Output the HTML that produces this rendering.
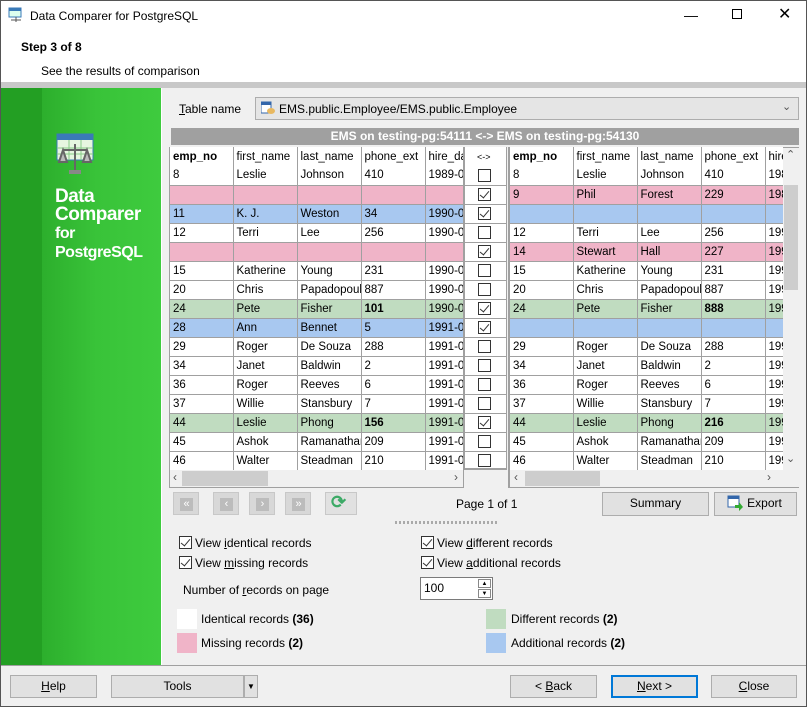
<!DOCTYPE html>
<html><head><meta charset="utf-8"><style>
*{margin:0;padding:0;box-sizing:border-box}
body{width:807px;height:707px;overflow:hidden;background:#f0f0f0;font-family:"Liberation Sans",sans-serif;font-size:12px;color:#000;position:relative}
.a{position:absolute}
.g{position:absolute;border-collapse:collapse;table-layout:fixed;background:#fff}
.g td{height:19px;border:1px solid #a0a0a0;border-top:none;border-left:none;padding:0 3px;white-space:nowrap;overflow:hidden;font-size:11.5px;font-family:"Liberation Sans",sans-serif}
.g tr.h td{font-weight:normal;border-bottom:none;height:19px}
.p td{background:#f0b4c8}.b td{background:#a8c8f0}.n td{background:#c0dcc0}
.btn{position:absolute;background:#e1e1e1;border:1px solid #adadad;text-align:center;line-height:21px;font-size:12px}
.cb{position:absolute;width:13px;height:13px;border:1px solid #333;background:#fff}
.ck::after{content:"";position:absolute;left:3px;top:0px;width:4px;height:8px;border:solid #333;border-width:0 1.5px 1.5px 0;transform:rotate(40deg)}
.nb{position:absolute;width:26px;height:23px;background:#d8d8d8;border:1px solid #c8c8c8}
.nb span{position:absolute;left:6px;top:5px;width:13px;height:13px;background:#bcbcbc;color:#fff;font-size:11px;line-height:13px;text-align:center}
u{text-decoration:underline}
</style></head><body>
<div class="a" style="left:0;top:0;width:807px;height:82px;background:#fff"></div>
<svg class="a" style="left:8px;top:7px" width="16" height="16"><rect x="1" y="1" width="12" height="9" fill="#dfe" stroke="#3a7ab8"/><rect x="1" y="1" width="12" height="3" fill="#3a7ab8"/><path d="M3 13h10M8 10v5" stroke="#555"/></svg>
<div class="a" style="left:30px;top:9px;font-size:12px">Data Comparer for PostgreSQL</div>
<div class="a" style="left:684px;top:7px;font-size:14px">&#8212;</div>
<div class="a" style="left:732px;top:9px;width:10px;height:10px;border:1px solid #000"></div>
<div class="a" style="left:778px;top:4px;font-size:16px">&#10005;</div>
<div class="a" style="left:21px;top:40px;font-weight:bold">Step 3 of 8</div>
<div class="a" style="left:41px;top:64px">See the results of comparison</div>
<div class="a" style="left:0;top:82px;width:807px;height:6px;background:#c8c8c8"></div>
<div class="a" style="left:0;top:88px;width:161px;height:578px;background:linear-gradient(90deg,#20a020 0,#2cae2c 25%,#39c339 60%,#3ecb3e 100%)"></div>
<div class="a" style="left:0;top:88px;width:42px;height:578px;background:#239f23"></div>
<svg class="a" style="left:55px;top:132px" width="45" height="45"><rect x="2" y="2" width="36" height="26" fill="#e6f6e0" stroke="#3a7ab8"/><rect x="2" y="2" width="36" height="6" fill="#3a7ab8"/><path d="M14 8v20M26 8v20M2 16h36M2 22h36" stroke="#8c8"/><path d="M20 12v26M8 18h24M4 30l4-12 4 12zM28 30l4-12 4 12z" stroke="#666" stroke-width="2" fill="#bbb"/><rect x="14" y="38" width="12" height="4" fill="#888"/></svg>
<div class="a" style="left:55px;top:188px;color:#fff;font-weight:bold;font-size:19px;line-height:18px;letter-spacing:-0.5px">Data<br>Comparer<br><span style="font-size:16px">for<br>PostgreSQL</span></div>
<div class="a" style="left:161px;top:88px;width:1px;height:578px;background:#fff"></div>

<div class="a" style="left:179px;top:102px"><u>T</u>able name</div>
<div class="a" style="left:255px;top:97px;width:544px;height:23px;background:#e5e5e5;border:1px solid #adadad"></div>
<svg class="a" style="left:261px;top:101px" width="14" height="14"><rect x="0" y="1" width="10" height="11" fill="#fff" stroke="#36a"/><rect x="0" y="1" width="10" height="3" fill="#36a"/><ellipse cx="10" cy="10" rx="4" ry="3" fill="#e8b860"/></svg>
<div class="a" style="left:279px;top:102px">EMS.public.Employee/EMS.public.Employee</div>
<div class="a" style="left:782px;top:100px;font-size:11px;color:#555">&#8964;</div>
<div class="a" style="left:171px;top:128px;width:628px;height:17px;background:#a0a0a0;color:#fff;font-weight:bold;text-align:center;line-height:17px">EMS on testing-pg:54111 &lt;-&gt; EMS on testing-pg:54130</div>

<div class="a" style="left:169px;top:147px;width:295px;height:341px;border:1px solid #a0a0a0;background:#fff"></div>
<table class="g" style="left:170px;top:147px;width:293px">
<colgroup><col style="width:63px"><col style="width:64px"><col style="width:64px"><col style="width:64px"><col style="width:38px"></colgroup>
<tr class="h"><td style="font-weight:bold">emp_no</td><td>first_name</td><td>last_name</td><td>phone_ext</td><td>hire_date</td></tr>
<tr><td>8</td><td>Leslie</td><td>Johnson</td><td>410</td><td>1989-0</td></tr>
<tr class="p"><td></td><td></td><td></td><td></td><td></td></tr>
<tr class="b"><td>11</td><td>K. J.</td><td>Weston</td><td>34</td><td>1990-0</td></tr>
<tr><td>12</td><td>Terri</td><td>Lee</td><td>256</td><td>1990-0</td></tr>
<tr class="p"><td></td><td></td><td></td><td></td><td></td></tr>
<tr><td>15</td><td>Katherine</td><td>Young</td><td>231</td><td>1990-0</td></tr>
<tr><td>20</td><td>Chris</td><td>Papadopoulos</td><td>887</td><td>1990-0</td></tr>
<tr class="n"><td>24</td><td>Pete</td><td>Fisher</td><td><b>101</b></td><td>1990-0</td></tr>
<tr class="b"><td>28</td><td>Ann</td><td>Bennet</td><td>5</td><td>1991-0</td></tr>
<tr><td>29</td><td>Roger</td><td>De Souza</td><td>288</td><td>1991-0</td></tr>
<tr><td>34</td><td>Janet</td><td>Baldwin</td><td>2</td><td>1991-0</td></tr>
<tr><td>36</td><td>Roger</td><td>Reeves</td><td>6</td><td>1991-0</td></tr>
<tr><td>37</td><td>Willie</td><td>Stansbury</td><td>7</td><td>1991-0</td></tr>
<tr class="n"><td>44</td><td>Leslie</td><td>Phong</td><td><b>156</b></td><td>1991-0</td></tr>
<tr><td>45</td><td>Ashok</td><td>Ramanathan</td><td>209</td><td>1991-0</td></tr>
<tr><td>46</td><td>Walter</td><td>Steadman</td><td>210</td><td>1991-0</td></tr>
</table>
<div class="a" style="left:170px;top:470px;width:293px;height:17px;background:#f0f0f0"></div>
<div class="a" style="left:182px;top:471px;width:86px;height:15px;background:#cdcdcd"></div>
<div class="a" style="left:173px;top:470px;font-size:12px;color:#555">&#8249;</div>
<div class="a" style="left:454px;top:470px;font-size:12px;color:#555">&#8250;</div>

<div class="a" style="left:463px;top:147px;width:44px;height:323px;background:#fff;border-left:2px solid #a0a0a0;border-right:1px solid #a0a0a0;border-bottom:2px solid #a0a0a0"></div>
<div class="a" style="left:477px;top:152px;font-size:9px">&lt;-&gt;</div>
<div class="cb" style="left:478px;top:169px"></div>
<div class="cb ck" style="left:478px;top:188px"></div>
<div class="cb ck" style="left:478px;top:207px"></div>
<div class="cb" style="left:478px;top:226px"></div>
<div class="cb ck" style="left:478px;top:245px"></div>
<div class="cb" style="left:478px;top:264px"></div>
<div class="cb" style="left:478px;top:283px"></div>
<div class="cb ck" style="left:478px;top:302px"></div>
<div class="cb ck" style="left:478px;top:321px"></div>
<div class="cb" style="left:478px;top:340px"></div>
<div class="cb" style="left:478px;top:359px"></div>
<div class="cb" style="left:478px;top:378px"></div>
<div class="cb" style="left:478px;top:397px"></div>
<div class="cb ck" style="left:478px;top:416px"></div>
<div class="cb" style="left:478px;top:435px"></div>
<div class="cb" style="left:478px;top:454px"></div>
<div class="a" style="left:464px;top:185px;width:43px;height:1px;background:#a0a0a0;box-shadow:0 19px #a0a0a0,0 38px #a0a0a0,0 57px #a0a0a0,0 76px #a0a0a0,0 95px #a0a0a0,0 114px #a0a0a0,0 133px #a0a0a0,0 152px #a0a0a0,0 171px #a0a0a0,0 190px #a0a0a0,0 209px #a0a0a0,0 228px #a0a0a0,0 247px #a0a0a0,0 266px #a0a0a0"></div>

<div class="a" style="left:508px;top:147px;width:291px;height:341px;border:1px solid #a0a0a0;border-left:2px solid #a0a0a0;background:#fff"></div>
<table class="g" style="left:510px;top:147px;width:273px">
<colgroup><col style="width:63px"><col style="width:64px"><col style="width:64px"><col style="width:64px"><col style="width:18px"></colgroup>
<tr class="h"><td style="font-weight:bold">emp_no</td><td>first_name</td><td>last_name</td><td>phone_ext</td><td>hire_date</td></tr>
<tr><td>8</td><td>Leslie</td><td>Johnson</td><td>410</td><td>198</td></tr>
<tr class="p"><td>9</td><td>Phil</td><td>Forest</td><td>229</td><td>198</td></tr>
<tr class="b"><td></td><td></td><td></td><td></td><td></td></tr>
<tr><td>12</td><td>Terri</td><td>Lee</td><td>256</td><td>199</td></tr>
<tr class="p"><td>14</td><td>Stewart</td><td>Hall</td><td>227</td><td>199</td></tr>
<tr><td>15</td><td>Katherine</td><td>Young</td><td>231</td><td>199</td></tr>
<tr><td>20</td><td>Chris</td><td>Papadopoulos</td><td>887</td><td>199</td></tr>
<tr class="n"><td>24</td><td>Pete</td><td>Fisher</td><td><b>888</b></td><td>199</td></tr>
<tr class="b"><td></td><td></td><td></td><td></td><td></td></tr>
<tr><td>29</td><td>Roger</td><td>De Souza</td><td>288</td><td>199</td></tr>
<tr><td>34</td><td>Janet</td><td>Baldwin</td><td>2</td><td>199</td></tr>
<tr><td>36</td><td>Roger</td><td>Reeves</td><td>6</td><td>199</td></tr>
<tr><td>37</td><td>Willie</td><td>Stansbury</td><td>7</td><td>199</td></tr>
<tr class="n"><td>44</td><td>Leslie</td><td>Phong</td><td><b>216</b></td><td>199</td></tr>
<tr><td>45</td><td>Ashok</td><td>Ramanathan</td><td>209</td><td>199</td></tr>
<tr><td>46</td><td>Walter</td><td>Steadman</td><td>210</td><td>199</td></tr>
</table>
<div class="a" style="left:783px;top:148px;width:16px;height:322px;background:#f0f0f0"></div>
<div class="a" style="left:784px;top:185px;width:14px;height:105px;background:#cdcdcd"></div>
<div class="a" style="left:786px;top:148px;font-size:11px;color:#555">&#8963;</div>
<div class="a" style="left:786px;top:452px;font-size:11px;color:#555">&#8964;</div>
<div class="a" style="left:510px;top:470px;width:289px;height:17px;background:#f0f0f0"></div>
<div class="a" style="left:525px;top:471px;width:75px;height:15px;background:#cdcdcd"></div>
<div class="a" style="left:514px;top:470px;font-size:12px;color:#555">&#8249;</div>
<div class="a" style="left:767px;top:470px;font-size:12px;color:#555">&#8250;</div>

<div class="nb" style="left:173px;top:492px"><span>&#171;</span></div>
<div class="nb" style="left:213px;top:492px"><span>&#8249;</span></div>
<div class="nb" style="left:249px;top:492px"><span>&#8250;</span></div>
<div class="nb" style="left:285px;top:492px"><span>&#187;</span></div>
<div class="nb" style="left:325px;top:492px;width:32px;background:#e1e1e1"></div>
<div class="a" style="left:331px;top:492px;color:#3caa66;font-size:18px;font-weight:bold">&#10227;</div>
<div class="a" style="left:456px;top:497px">Page 1 of 1</div>
<div class="btn" style="left:602px;top:492px;width:107px;height:24px">Summary</div>
<div class="btn" style="left:714px;top:492px;width:83px;height:24px;padding-left:18px">Export</div>
<svg class="a" style="left:727px;top:495px" width="16" height="16"><rect x="1" y="1" width="11" height="11" fill="#fff" stroke="#36a"/><rect x="1" y="1" width="11" height="3" fill="#36a"/><path d="M8 10h4v-3l4 5-4 4v-3H8z" fill="#3a3"/></svg>
<div class="a" style="left:395px;top:521px;width:102px;height:3px;background:repeating-linear-gradient(90deg,#aaa 0 2px,transparent 2px 4px)"></div>

<div class="cb ck" style="left:179px;top:536px"></div><div class="a" style="left:195px;top:536px">View <u>i</u>dentical records</div>
<div class="cb ck" style="left:179px;top:556px"></div><div class="a" style="left:195px;top:556px">View <u>m</u>issing records</div>
<div class="cb ck" style="left:421px;top:536px"></div><div class="a" style="left:437px;top:536px">View <u>d</u>ifferent records</div>
<div class="cb ck" style="left:421px;top:556px"></div><div class="a" style="left:437px;top:556px">View <u>a</u>dditional records</div>
<div class="a" style="left:183px;top:583px">Number of <u>r</u>ecords on page</div>
<div class="a" style="left:420px;top:577px;width:73px;height:23px;background:#fff;border:1px solid #7a7a7a"></div>
<div class="a" style="left:424px;top:581px">100</div>
<div class="a" style="left:478px;top:579px;width:13px;height:9px;border:1px solid #888;font-size:6px;text-align:center;line-height:8px">&#9650;</div>
<div class="a" style="left:478px;top:589px;width:13px;height:9px;border:1px solid #888;font-size:6px;text-align:center;line-height:8px">&#9660;</div>

<div class="a" style="left:177px;top:609px;width:20px;height:20px;background:#fff"></div><div class="a" style="left:201px;top:612px">Identical records <b>(36)</b></div>
<div class="a" style="left:177px;top:633px;width:20px;height:20px;background:#f0b4c8"></div><div class="a" style="left:201px;top:636px">Missing records <b>(2)</b></div>
<div class="a" style="left:486px;top:609px;width:20px;height:20px;background:#c0dcc0"></div><div class="a" style="left:511px;top:612px">Different records <b>(2)</b></div>
<div class="a" style="left:486px;top:633px;width:20px;height:20px;background:#a8c8f0"></div><div class="a" style="left:511px;top:636px">Additional records <b>(2)</b></div>

<div class="a" style="left:0;top:665px;width:807px;height:1px;background:#a0a0a0"></div>
<div class="btn" style="left:10px;top:675px;width:87px;height:23px"><u>H</u>elp</div>
<div class="btn" style="left:111px;top:675px;width:133px;height:23px">Tools</div>
<div class="btn" style="left:244px;top:675px;width:14px;height:23px;font-size:8px">&#9660;</div>
<div class="btn" style="left:510px;top:675px;width:87px;height:23px">&lt; <u>B</u>ack</div>
<div class="btn" style="left:611px;top:675px;width:87px;height:23px;border:2px solid #0078d7;line-height:19px"><u>N</u>ext &gt;</div>
<div class="btn" style="left:711px;top:675px;width:86px;height:23px"><u>C</u>lose</div>
<div class="a" style="left:0;top:0;width:807px;height:707px;border:1px solid #555;pointer-events:none"></div>
</body></html>
